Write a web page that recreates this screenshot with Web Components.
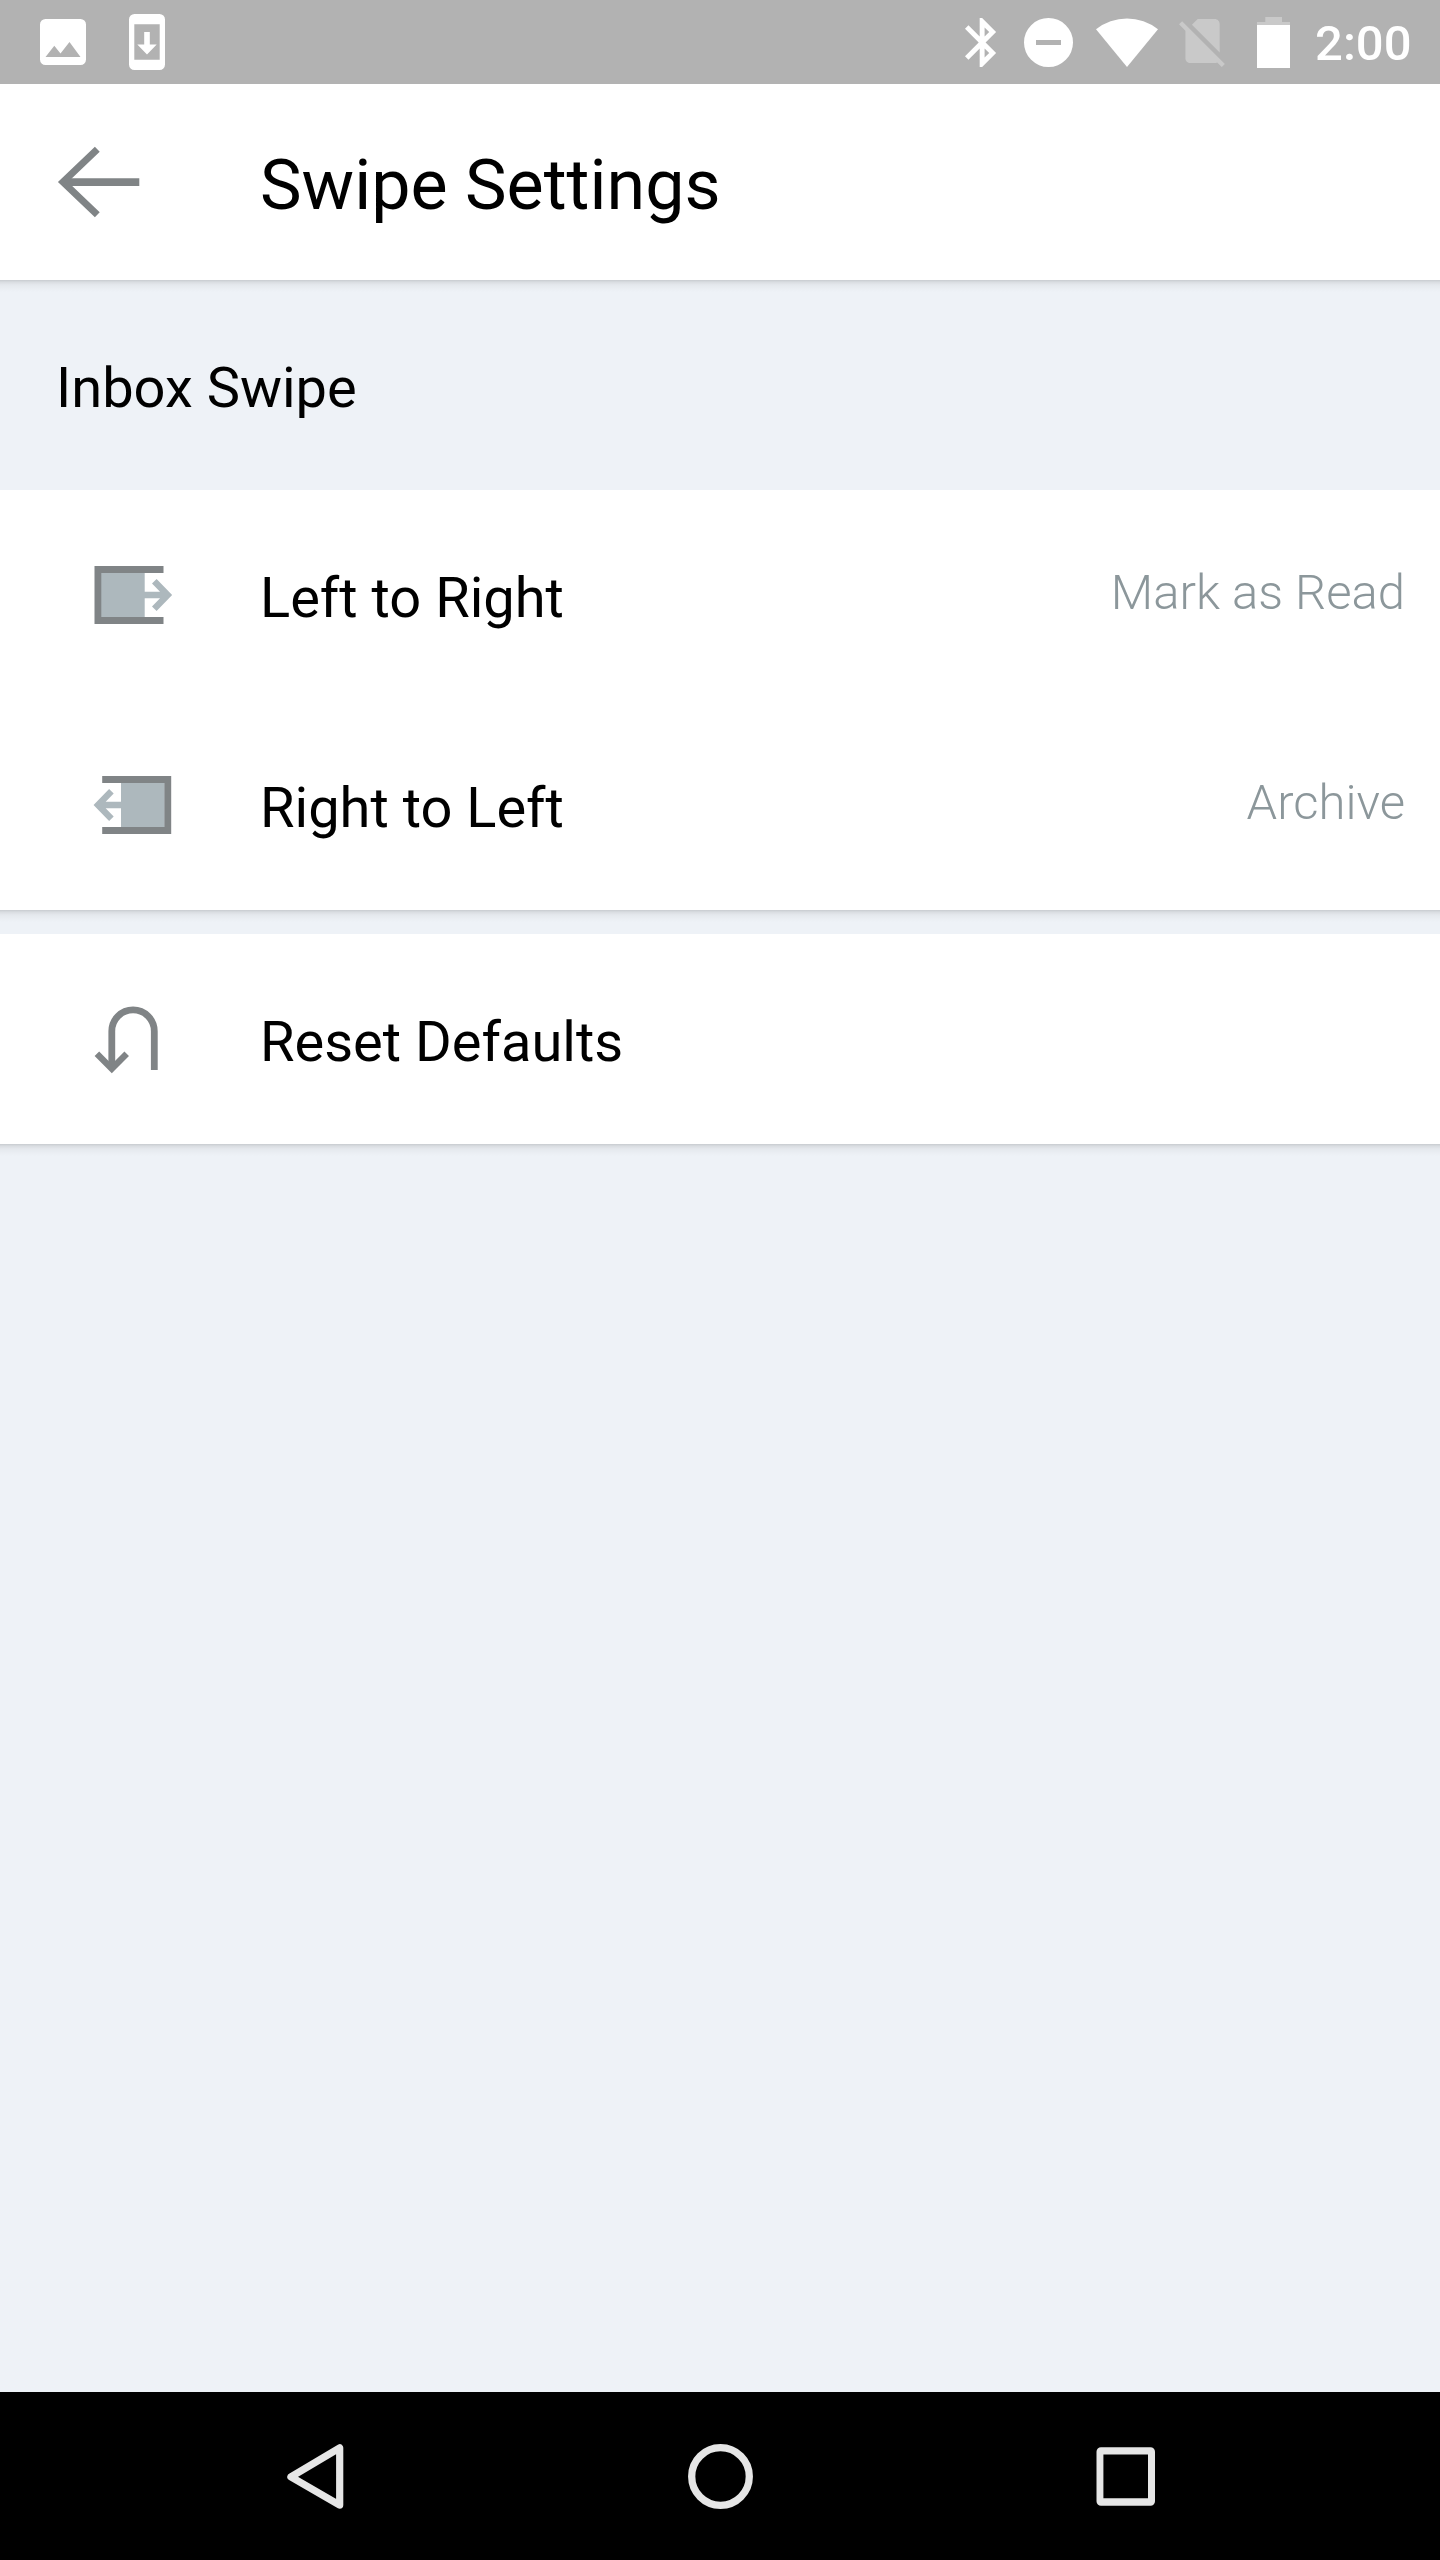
<!DOCTYPE html>
<html lang="en">
<head>
<meta charset="utf-8">
<title>Swipe Settings</title>
<style>
  :root {
    --background-color: #eef2f7;
    --surface-color: #fff;
    --text-color: #000;
    --secondary-text-color: #8c979b;
    --icon-color: #808486;
    --light-icon-color: #adb8bd;
  }

  body {
    margin: 0;
    background: var(--background-color);
    color: var(--text-color);
    font-family: Roboto, sans-serif;
  }
</style>
</head>
<body>
<settings-screen></settings-screen>

<script>
const ICONS = {
  image: {
    box: "40 19 46 46",
    body: `<path fill="#fff" fill-rule="evenodd" d="M45.5 19h35a5.5 5.5 0 0 1 5.5 5.5v35a5.5 5.5 0 0 1-5.5 5.5h-35a5.5 5.5 0 0 1-5.5-5.5v-35a5.5 5.5 0 0 1 5.5-5.5zM45.5 57h35L69.5 42l-9 11.5-6.2-7.7z"/>`,
  },
  update: {
    box: "129 14 36 56",
    body: `<path fill="#fff" fill-rule="evenodd" d="M134.5 14h25a5.5 5.5 0 0 1 5.5 5.5v45a5.5 5.5 0 0 1-5.5 5.5h-25a5.5 5.5 0 0 1-5.5-5.5v-45a5.5 5.5 0 0 1 5.5-5.5zM134.3 24.3v35.4h25.4v-35.4z"/>
      <path fill="#fff" d="M144.2 32h5.6v12.4h6.9L147 54.4l-9.7-10h6.9z"/>`,
  },
  bluetooth: {
    box: "5 2 12.71 20", width: 31.14, height: 49,
    body: `<path fill="#fff" d="M17.71 7.71L12 2h-1v7.59L6.41 5 5 6.41 10.59 12 5 17.59 6.41 19 11 14.41V22h1l5.71-5.71-4.3-4.29 4.3-4.29zM13 5.83l1.88 1.88L13 9.59V5.83zm1.88 10.46L13 18.17v-3.76l1.88 1.88z"/>`,
  },
  dnd: {
    box: "1024 18 49 49",
    body: `<path fill="#fff" fill-rule="evenodd" d="M1024 42.5a24.5 24.5 0 1 0 49 0a24.5 24.5 0 1 0-49 0zM1036 40h25v5h-25z"/>`,
  },
  wifi: {
    box: "1096 17 62 49",
    body: `<path fill="#fff" d="M1096 28.2A50 50 0 0 1 1158 28.2L1127 66z"/>`,
  },
  nosim: {
    box: "2.38 3 18.74 19.62", width: 45.9, height: 48,
    body: `<path fill="#c9c9c9" d="M18.99 5c0-1.1-.89-2-1.99-2h-7L7.66 5.34 19 16.68 18.99 5zM3.65 3.88L2.38 5.15 5 7.77V19c0 1.1.9 2 2 2h10.01c.35 0 .67-.1.96-.26l1.88 1.88 1.27-1.27L3.65 3.88z"/>`,
  },
  battery: {
    box: "1257 16 33 51",
    body: `<path fill="#c9c9c9" d="M1265.3 16h16.7v5h8v3.5h-33V21h8.3z"/><path fill="#fff" d="M1257 24h33v43h-33z"/>`,
  },
  arrow: {
    box: "58 146 82 72",
    body: `<path fill="none" stroke="var(--icon-color)" stroke-width="7" d="M97.3 149.3L63 182l34.3 32.7"/><path fill="var(--icon-color)" d="M63 178.3h76.3v7.6H63z"/>`,
  },
  swipeRight: {
    box: "93 566 80 58",
    body: `<path fill="var(--light-icon-color)" d="M101 572h43.7v46H101z"/>
      <path fill="none" stroke="var(--light-icon-color)" stroke-width="6.4" d="M144 595h23M154.3 581.2L167.7 595l-13.4 13.8"/>
      <path fill="none" stroke="var(--icon-color)" stroke-width="6.8" d="M163.5 569.5H97.9v51h65.6"/>`,
  },
  swipeLeft: {
    box: "93 566 80 58",
    body: `<g transform="matrix(-1 0 0 1 265.7 0)">
      <path fill="var(--light-icon-color)" d="M101 572h43.7v46H101z"/>
      <path fill="none" stroke="var(--light-icon-color)" stroke-width="6.4" d="M144 595h23M154.3 581.2L167.7 595l-13.4 13.8"/>
      <path fill="none" stroke="var(--icon-color)" stroke-width="6.8" d="M163.5 569.5H97.9v51h65.6"/></g>`,
  },
  reset: {
    box: "93 1004 80 70",
    body: `<path fill="none" stroke="var(--icon-color)" stroke-width="6.8" d="M154.3 1070v-38.8a21.25 21.25 0 0 0-42.5 0V1069"/>
      <path fill="none" stroke="var(--icon-color)" stroke-width="6.4" d="M96.9 1053.7l14.9 15.1 14.9-15.1"/>`,
  },
  back: {
    box: "282 2443 66 66",
    body: `<path fill="none" stroke="#e6e6e6" stroke-width="7.2" stroke-linejoin="round" d="M290.9 2476.8L339.7 2447.9v57.2z"/>`,
  },
  home: {
    box: "687 2443 66 66",
    body: `<circle cx="720.5" cy="2476.5" r="28.8" fill="none" stroke="#e6e6e6" stroke-width="7.3"/>`,
  },
  recent: {
    box: "1092 2443 66 66",
    body: `<path fill="#e6e6e6" fill-rule="evenodd" d="M1101 2447.3h49.5a4.5 4.5 0 0 1 4.5 4.5v49.5a4.5 4.5 0 0 1-4.5 4.5h-49.5a4.5 4.5 0 0 1-4.5-4.5v-49.5a4.5 4.5 0 0 1 4.5-4.5zM1103.4 2454.6v43.6h44.6v-43.6z"/>`,
  },
};

class AppIcon extends HTMLElement {
  constructor() {
    super();
    this.attachShadow({ mode: "open" });
  }

  connectedCallback() {
    const icon = ICONS[this.getAttribute("name")];
    const [, , w, h] = icon.box.split(" ");

    this.shadowRoot.innerHTML = `
<style>
:host {
    display: block;
    flex: none;
}

svg {
    display: block;
    overflow: visible;
}
</style>
<svg width="${icon.width || w}" height="${icon.height || h}" viewBox="${icon.box}" aria-hidden="true">${icon.body}</svg>
`;
  }
}

// registers an element whose shadow root is cloned from static markup
function defineElement(name, html) {
  const template = document.createElement("template");
  template.innerHTML = html;

  window.customElements.define(name, class extends HTMLElement {
    constructor() {
      super();
      this.attachShadow({ mode: "open" });
      this.shadowRoot.appendChild(template.content.cloneNode(true));
    }
  });
}

window.customElements.define("app-icon", AppIcon);

defineElement("status-bar", `
<style>
:host {
    display: flex;
    justify-content: space-between;
    height: 84px;
    box-sizing: border-box;
    padding: 0 28.5px 0 40px;
    background: #b2b2b2;
    color: #fff;
}

.group {
    display: flex;
    align-items: center;
}

.notifications {
    gap: 43px;
}

.dnd {
    margin-left: 28px;
}

.wifi {
    margin-left: 23px;
}

.nosim {
    margin: 1px 0 0 21px;
}

.battery {
    margin-left: 32px;
}

.clock {
    margin-left: 25.5px;
    padding-top: 3px;
    font-size: 49px;
    font-weight: 500;
    line-height: 58px;
}
</style>
<div class="group notifications">
  <app-icon name="image"></app-icon>
  <app-icon name="update"></app-icon>
</div>
<div class="group">
  <app-icon name="bluetooth"></app-icon>
  <app-icon class="dnd" name="dnd"></app-icon>
  <app-icon class="wifi" name="wifi"></app-icon>
  <app-icon class="nosim" name="nosim"></app-icon>
  <app-icon class="battery" name="battery"></app-icon>
  <span class="clock"><slot></slot></span>
</div>
`);

defineElement("app-bar", `
<style>
:host {
    display: flex;
    align-items: center;
    height: 196px;
    padding-left: 58px;
    background: var(--surface-color);
}

h1 {
    margin: 0 0 0 120px;
    padding-top: 6px;
    font-size: 70px;
    font-weight: 400;
    line-height: 82px;
}
</style>
<app-icon name="arrow"></app-icon>
<h1><slot></slot></h1>
`);

defineElement("drop-shadow", `
<style>
:host {
    display: block;
    height: 12px;
    background: linear-gradient(rgba(0, 0, 0, .16), rgba(0, 0, 0, .09) 2px, rgba(0, 0, 0, .04) 5px, rgba(0, 0, 0, .015) 9px, transparent);
}
</style>
`);

defineElement("section-title", `
<style>
:host {
    display: flex;
    align-items: center;
    height: 198px;
    padding-left: 56px;
}

h2 {
    margin: 0;
    padding-bottom: 6px;
    font-size: 56px;
    font-weight: 400;
    line-height: 66px;
}
</style>
<h2><slot></slot></h2>
`);

defineElement("settings-row", `
<style>
:host {
    display: flex;
    align-items: center;
    height: 210px;
    box-sizing: border-box;
    padding: 0 35px 0 93px;
    background: var(--surface-color);
}

.label {
    flex: 1;
    margin-left: 87px;
    padding-top: 6px;
    font-size: 56px;
    line-height: 66px;
}

.value {
    padding-bottom: 5px;
    color: var(--secondary-text-color);
    font-size: 49px;
    font-weight: 300;
    line-height: 58px;
}
</style>
<slot name="icon"></slot>
<span class="label"><slot></slot></span>
<span class="value"><slot name="value"></slot></span>
`);

defineElement("nav-bar", `
<style>
:host {
    display: flex;
    justify-content: space-between;
    align-items: center;
    height: 168px;
    box-sizing: border-box;
    padding: 0 282px;
    background: #000;
}
</style>
<app-icon name="back"></app-icon>
<app-icon name="home"></app-icon>
<app-icon name="recent"></app-icon>
`);

defineElement("settings-screen", `
<style>
:host {
    display: flex;
    flex-direction: column;
    width: 1440px;
    height: 2560px;
}

main {
    flex: 1;
}

.spaced {
    margin-bottom: 12px;
}
</style>
<status-bar>2:00</status-bar>
<app-bar>Swipe Settings</app-bar>
<main>
  <drop-shadow></drop-shadow>
  <section-title>Inbox Swipe</section-title>
  <settings-row>
    <app-icon slot="icon" name="swipeRight"></app-icon>
    Left to Right
    <span slot="value">Mark as Read</span>
  </settings-row>
  <settings-row>
    <app-icon slot="icon" name="swipeLeft"></app-icon>
    Right to Left
    <span slot="value">Archive</span>
  </settings-row>
  <drop-shadow class="spaced"></drop-shadow>
  <settings-row>
    <app-icon slot="icon" name="reset"></app-icon>
    Reset Defaults
  </settings-row>
  <drop-shadow></drop-shadow>
</main>
<nav-bar></nav-bar>
`);
</script>
</body>
</html>
